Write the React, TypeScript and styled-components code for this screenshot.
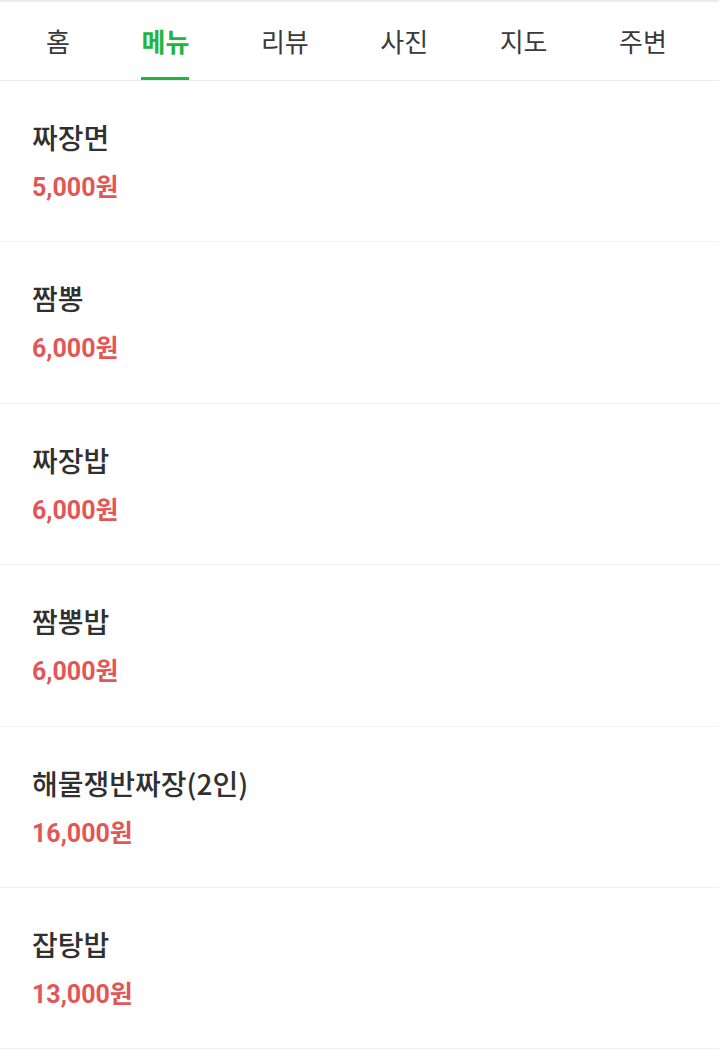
import styled, {createGlobalStyle} from "styled-components";

const tabs = ['홈', '메뉴', '리뷰', '사진', '지도', '주변']

const menuList = [
  {name: '짜장면', price: '5,000원'},
  {name: '짬뽕', price: '6,000원'},
  {name: '짜장밥', price: '6,000원'},
  {name: '짬뽕밥', price: '6,000원'},
  {name: '해물쟁반짜장(2인)', price: '16,000원'},
  {name: '잡탕밥', price: '13,000원'},
]

const GlobalStyle = createGlobalStyle`
  * {
    box-sizing: border-box;
  }

  body {
    margin: 0;
    background: white;
    font-family: Roboto, "Noto Sans CJK KR", sans-serif;
  }
`

export default function App() {
  return (
    <StyledPage>
      <GlobalStyle/>
      <StyledTabBar>
        {tabs.map((tab) => (
          <StyledTab key={tab} active={tab === '메뉴'}>{tab}</StyledTab>
        ))}
      </StyledTabBar>

      <StyledMenuList>
        {menuList.map((item) => (
          <StyledMenuItem key={item.name}>
            <StyledMenuName>{item.name}</StyledMenuName>
            <StyledMenuPrice>{item.price}</StyledMenuPrice>
          </StyledMenuItem>
        ))}
      </StyledMenuList>
    </StyledPage>
  )
}

const StyledPage = styled.div`
  width: 719px;
  min-height: 1050px;
  background: white;
`

const StyledTabBar = styled.nav`
  display: flex;
  justify-content: space-between;
  height: 81px;
  padding: 0 52px 0 46px;
  border-top: 2px solid #eaeded;
  border-bottom: 1px solid #e9ecec;
`

interface StyledTabProps {
  active: boolean
}

const StyledTab = styled.div<StyledTabProps>`
  display: flex;
  align-items: center;
  padding-top: 1px;
  font-family: "Noto Sans CJK KR", sans-serif;
  font-size: 26px;
  font-weight: ${props => props.active ? 700 : 400};
  color: ${props => props.active ? '#22b53b' : '#3a3a3a'};
  border-bottom: 3px solid ${props => props.active ? '#22b53b' : 'transparent'};
`

const StyledMenuList = styled.ul`
  margin: 0;
  padding: 0;
  list-style: none;
`

const StyledMenuItem = styled.li`
  display: flex;
  flex-flow: nowrap column;
  gap: 20px;
  height: 161.4px;
  padding: 40px 32px 0;
  border-bottom: 1px solid #eef1f1;
`

const StyledMenuName = styled.strong`
  font-family: "Noto Sans CJK KR", sans-serif;
  font-size: 28px;
  line-height: 32px;
  font-weight: 500;
  color: #303030;
`

const StyledMenuPrice = styled.span`
  font-family: Roboto, "Noto Sans CJK KR", sans-serif;
  font-size: 25px;
  line-height: 30px;
  font-weight: 700;
  color: #e25656;
`
